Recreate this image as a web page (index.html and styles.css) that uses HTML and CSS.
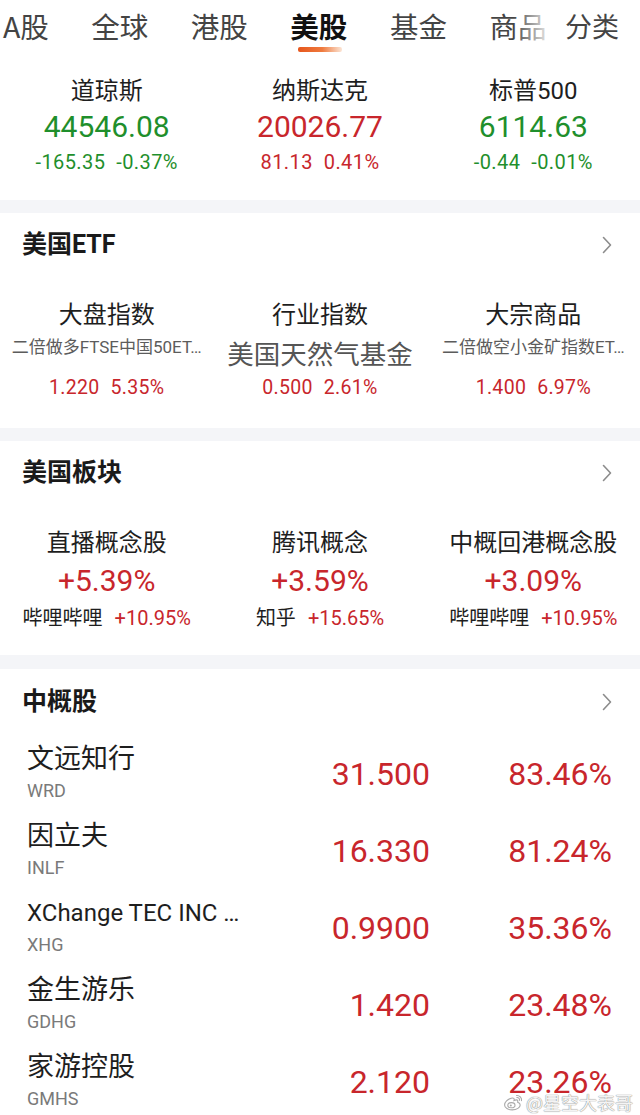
FILE: index.html
```html
<!DOCTYPE html>
<html lang="zh-CN">
<head>
<meta charset="utf-8">
<title>美股</title>
<link rel="stylesheet" href="styles.css">
</head>
<body>
<div class="page">
  <nav class="tabs">
    <div class="tab-scroll">
      <span class="tab">A股</span>
      <span class="tab">全球</span>
      <span class="tab">港股</span>
      <span class="tab active">美股</span>
      <span class="tab">基金</span>
      <span class="tab">商品</span>
    </div>
    <div class="tab-more">分类</div>
  </nav>

  <section class="indices">
    <div class="idx">
      <div class="idx-name">道琼斯</div>
      <div class="idx-val down">44546.08</div>
      <div class="idx-chg down"><span>-165.35</span><span>-0.37%</span></div>
    </div>
    <div class="idx">
      <div class="idx-name">纳斯达克</div>
      <div class="idx-val up">20026.77</div>
      <div class="idx-chg up"><span>81.13</span><span>0.41%</span></div>
    </div>
    <div class="idx">
      <div class="idx-name">标普500</div>
      <div class="idx-val down">6114.63</div>
      <div class="idx-chg down"><span>-0.44</span><span>-0.01%</span></div>
    </div>
  </section>

  <div class="band"></div>

  <section class="block etf">
    <header class="block-head">
      <h2>美国ETF</h2>
      <svg class="chev" width="10" height="18" viewBox="0 0 10 18"><polyline points="1.5,1.5 8.5,9 1.5,16.5" fill="none" stroke="#8c8c8c" stroke-width="1.6" stroke-linecap="round" stroke-linejoin="round"/></svg>
    </header>
    <div class="cols">
      <div class="col">
        <div class="col-title">大盘指数</div>
        <div class="etf-sub"><span class="sub-small">二倍做多FTSE中国50ET…</span></div>
        <div class="etf-val"><span>1.220</span><span>5.35%</span></div>
      </div>
      <div class="col">
        <div class="col-title">行业指数</div>
        <div class="etf-sub"><span class="sub-big">美国天然气基金</span></div>
        <div class="etf-val"><span>0.500</span><span>2.61%</span></div>
      </div>
      <div class="col">
        <div class="col-title">大宗商品</div>
        <div class="etf-sub"><span class="sub-small">二倍做空小金矿指数ET…</span></div>
        <div class="etf-val"><span>1.400</span><span>6.97%</span></div>
      </div>
    </div>
  </section>

  <div class="band"></div>

  <section class="block sector">
    <header class="block-head">
      <h2>美国板块</h2>
      <svg class="chev" width="10" height="18" viewBox="0 0 10 18"><polyline points="1.5,1.5 8.5,9 1.5,16.5" fill="none" stroke="#8c8c8c" stroke-width="1.6" stroke-linecap="round" stroke-linejoin="round"/></svg>
    </header>
    <div class="cols">
      <div class="col">
        <div class="col-title">直播概念股</div>
        <div class="sec-pct">+5.39%</div>
        <div class="sec-lead"><span class="lead-name">哔哩哔哩</span><span class="lead-pct">+10.95%</span></div>
      </div>
      <div class="col">
        <div class="col-title">腾讯概念</div>
        <div class="sec-pct">+3.59%</div>
        <div class="sec-lead"><span class="lead-name">知乎</span><span class="lead-pct">+15.65%</span></div>
      </div>
      <div class="col">
        <div class="col-title">中概回港概念股</div>
        <div class="sec-pct">+3.09%</div>
        <div class="sec-lead"><span class="lead-name">哔哩哔哩</span><span class="lead-pct">+10.95%</span></div>
      </div>
    </div>
  </section>

  <div class="band band-b"></div>

  <section class="block stocks">
    <header class="block-head">
      <h2>中概股</h2>
      <svg class="chev" width="10" height="18" viewBox="0 0 10 18"><polyline points="1.5,1.5 8.5,9 1.5,16.5" fill="none" stroke="#8c8c8c" stroke-width="1.6" stroke-linecap="round" stroke-linejoin="round"/></svg>
    </header>
    <div class="list">
      <div class="row">
        <div class="stk"><div class="stk-name">文远知行</div><div class="stk-code">WRD</div></div>
        <div class="stk-price">31.500</div>
        <div class="stk-pct">83.46%</div>
      </div>
      <div class="row">
        <div class="stk"><div class="stk-name">因立夫</div><div class="stk-code">INLF</div></div>
        <div class="stk-price">16.330</div>
        <div class="stk-pct">81.24%</div>
      </div>
      <div class="row">
        <div class="stk"><div class="stk-name latin">XChange TEC INC …</div><div class="stk-code">XHG</div></div>
        <div class="stk-price">0.9900</div>
        <div class="stk-pct">35.36%</div>
      </div>
      <div class="row">
        <div class="stk"><div class="stk-name">金生游乐</div><div class="stk-code">GDHG</div></div>
        <div class="stk-price">1.420</div>
        <div class="stk-pct">23.48%</div>
      </div>
      <div class="row">
        <div class="stk"><div class="stk-name">家游控股</div><div class="stk-code">GMHS</div></div>
        <div class="stk-price">2.120</div>
        <div class="stk-pct">23.26%</div>
      </div>
    </div>
  </section>

  <div class="watermark">
    <svg class="wb" width="20" height="17" viewBox="0 0 20 17"><path d="M8.2 4.2C4.6 5.3 1.6 8.2 1.6 10.9c0 3 3.6 5 7.6 5 4.6 0 8-2.4 8-5 0-1.9-1.8-2.4-2.6-2.7.4-1.1.4-2.3-1.2-2.3-1.2 0-2.4.6-2.4.6.5-1.5.2-3-2.8-2.300z" fill="none" stroke="#aaa" stroke-width="1.1"/><ellipse cx="8.4" cy="11.2" rx="3.6" ry="2.6" fill="none" stroke="#aaa" stroke-width="1.1"/><circle cx="7.8" cy="11.5" r="1" fill="#aaa"/><path d="M13.5 1.5a4.5 4.5 0 0 1 5 5.2M13.8 3.5a2.4 2.4 0 0 1 2.7 2.8" fill="none" stroke="#aaa" stroke-width="1.1" stroke-linecap="round"/></svg>
    <span>@星空大表哥</span>
  </div>
</div>
</body>
</html>
```

FILE: styles.css
```css
* { box-sizing: border-box; }

body {
  margin: 0;
  background: #ffffff;
  font-family: Roboto, "Noto Sans CJK SC", sans-serif;
  color: #1e1e1e;
}

.page {
  position: relative;
  width: 640px;
  height: 1115px;
  overflow: hidden;
  background: #ffffff;
}

/* ---------- tabs ---------- */
.tabs {
  position: relative;
  height: 56px;
  overflow: hidden;
}

.tab-scroll {
  display: flex;
  gap: 42.5px;
  padding: 6px 0 0 3px;
  white-space: nowrap;
}

.tab {
  position: relative;
  font-family: "Noto Sans CJK SC", sans-serif;
  font-size: 28.5px;
  line-height: 40px;
  color: #444444;
}

.tab.active {
  font-weight: 700;
  color: #111111;
}

.tab.active::after {
  content: "";
  position: absolute;
  left: 50%;
  top: 41px;
  width: 44px;
  height: 5px;
  margin-left: -21px;
  border-radius: 2px;
  background: linear-gradient(to right, #e6561c 0%, #ef7a3e 55%, rgba(246, 190, 150, 0.4) 100%);
}

.tab-more {
  position: absolute;
  top: 0;
  right: 0;
  height: 56px;
  padding: 6px 21px 0 52px;
  font-family: "Noto Sans CJK SC", sans-serif;
  font-size: 27px;
  line-height: 40px;
  color: #444444;
  background: linear-gradient(to right, rgba(255, 255, 255, 0) 0px, rgba(255, 255, 255, 0.85) 34px, #ffffff 48px);
}

/* ---------- colors ---------- */
.up { color: #c8262c; }
.down { color: #1f8f2c; }

/* ---------- indices ---------- */
.indices {
  display: grid;
  grid-template-columns: repeat(3, 1fr);
  padding: 20px 0 26px;
  height: 144px;
}

.idx {
  display: flex;
  flex-direction: column;
  align-items: center;
}

.idx-name {
  font-size: 24px;
  line-height: 30px;
  height: 30px;
  color: #1e1e1e;
}

.idx-val {
  font-size: 30px;
  line-height: 42px;
  height: 42px;
}

.idx-chg {
  display: flex;
  gap: 11px;
  font-size: 20px;
  line-height: 28px;
  height: 28px;
  letter-spacing: 0.4px;
}

/* ---------- separators ---------- */
.band {
  height: 13px;
  background: #f4f5f8;
}

.band-b { height: 14px; }

/* ---------- blocks ---------- */
.block-head {
  display: flex;
  align-items: center;
  justify-content: space-between;
  height: 40px;
  padding: 0 28px 0 22px;
}

.block-head h2 {
  margin: 0;
  font-size: 25px;
  font-weight: 700;
  line-height: 40px;
  color: #1a1a1a;
}

.chev { display: block; }

.etf { height: 215px; padding-top: 12px; }
.sector { height: 214px; padding-top: 12px; }
.stocks { padding-top: 13px; }

.cols {
  display: grid;
  grid-template-columns: repeat(3, 1fr);
  margin-top: 34px;
}

.col {
  display: flex;
  flex-direction: column;
  align-items: center;
  min-width: 0;
}

.col-title {
  font-size: 24px;
  line-height: 32px;
  height: 32px;
  color: #1e1e1e;
  white-space: nowrap;
}

.etf-sub {
  height: 44px;
  white-space: nowrap;
}

.sub-small {
  display: block;
  font-size: 17px;
  line-height: 32px;
  color: #5c5c5c;
}

.sub-big {
  display: block;
  font-family: "Noto Sans CJK SC", sans-serif;
  font-size: 26.5px;
  line-height: 44px;
  color: #555555;
}

.etf-val {
  display: flex;
  gap: 11px;
  font-size: 19.5px;
  line-height: 26px;
  height: 26px;
  letter-spacing: 0.3px;
  color: #c8262c;
}

.sec-pct {
  font-size: 30px;
  line-height: 44px;
  height: 44px;
  color: #c8262c;
}

.sec-lead {
  display: flex;
  align-items: baseline;
  gap: 12px;
  line-height: 30px;
  height: 30px;
  white-space: nowrap;
}

.lead-name {
  font-size: 20px;
  color: #1e1e1e;
}

.lead-pct {
  font-size: 20px;
  color: #c8262c;
}

/* ---------- stock list ---------- */
.list {
  display: flex;
  flex-direction: column;
  gap: 13px;
  margin-top: 20px;
}

.row {
  display: grid;
  grid-template-columns: 1fr 170px 182px;
  align-items: center;
  padding: 0 28px 0 27px;
  height: 64px;
}

.stk { min-width: 0; }

.stk-name {
  font-size: 27px;
  line-height: 34px;
  height: 34px;
  color: #1e1e1e;
  white-space: nowrap;
}

.stk-name.latin {
  font-size: 24px;
}

.stk-code {
  font-size: 18px;
  line-height: 30px;
  height: 30px;
  color: #7a7a7a;
}

.stk-price,
.stk-pct {
  font-size: 32px;
  line-height: 24px;
  text-align: right;
  color: #c8262c;
}

/* ---------- watermark ---------- */
.watermark {
  position: absolute;
  right: 7px;
  bottom: 4px;
  display: flex;
  align-items: center;
  gap: 3px;
  font-family: "Noto Sans CJK SC", sans-serif;
  font-size: 18px;
  line-height: 18px;
  color: rgba(255, 255, 255, 0.92);
  text-shadow: 0 0 1px #8a8a8a, 0 0 1px #8a8a8a;
}

.wb { display: block; }
```
